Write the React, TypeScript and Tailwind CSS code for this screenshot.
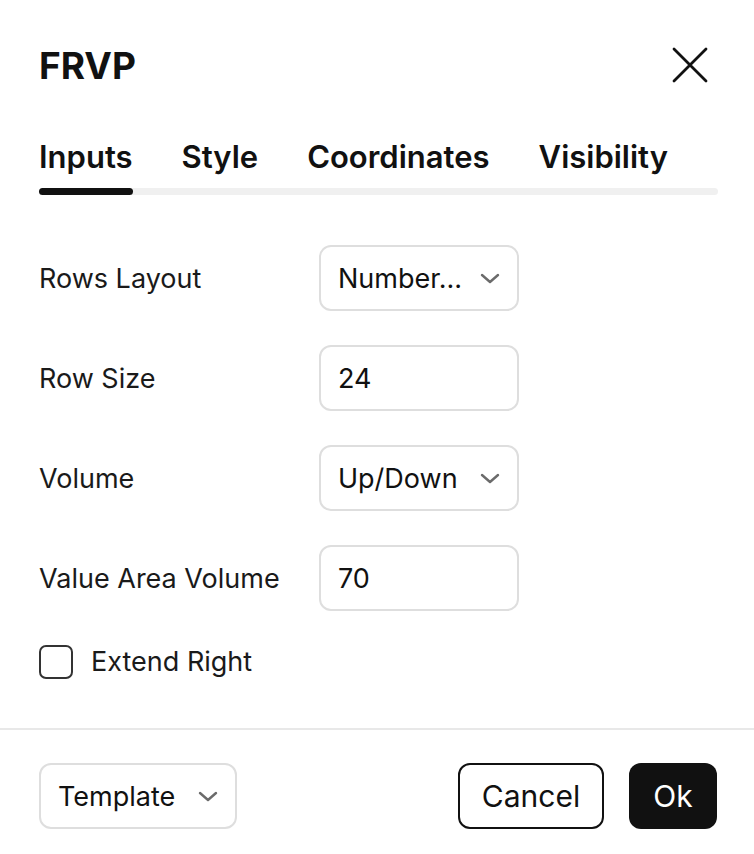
import React, { useState } from 'react';

const tabs = ['Inputs', 'Style', 'Coordinates', 'Visibility'];

const Chevron = () => (
  <svg width="22" height="22" viewBox="0 0 22 22" fill="none" className="shrink-0">
    <path d="M3 8l8 7 8-7" stroke="#6b6b6b" strokeWidth="2.4" strokeLinecap="round" strokeLinejoin="round" />
  </svg>
);

const SelectBox = ({ value, width = 'w-[200px]' }: { value: string; width?: string }) => (
  <div
    className={`${width} h-[66px] flex items-center justify-between border-2 border-[#dedede] rounded-[12px] pl-[17px] pr-[16px] text-[27px] text-[#111]`}
  >
    <span className="truncate pt-[3px]">{value}</span>
    <Chevron />
  </div>
);

const InputBox = ({ value }: { value: string }) => (
  <div className="w-[200px] h-[66px] flex items-center border-2 border-[#dedede] rounded-[12px] px-[17px] pt-[3px] text-[27px] text-[#111]">
    {value}
  </div>
);

export default function App() {
  const [active, setActive] = useState(0);
  const [extend, setExtend] = useState(false);

  const rows: Array<{ label: string; kind: 'select' | 'input'; value: string }> = [
    { label: 'Rows Layout', kind: 'select', value: 'Number...' },
    { label: 'Row Size', kind: 'input', value: '24' },
    { label: 'Volume', kind: 'select', value: 'Up/Down' },
    { label: 'Value Area Volume', kind: 'input', value: '70' },
  ];

  return (
    <div className="w-[754px] h-[854px] bg-white flex flex-col font-['Inter','Liberation_Sans',sans-serif] text-[#111]">
      {/* Header */}
      <div className="pt-[30px] pl-[39px] pr-[36px] h-[100px] flex items-center justify-between">
        <h1 className="text-[37px] font-bold leading-none">FRVP</h1>
        <button className="mr-[8px] w-[40px] h-[40px] flex items-center justify-center">
          <svg width="40" height="40" viewBox="0 0 40 40" fill="none">
            <path d="M4 4l32 32M36 4L4 36" stroke="#111" strokeWidth="2.8" strokeLinecap="round" />
          </svg>
        </button>
      </div>

      {/* Tabs */}
      <div className="pl-[39px] pr-[36px] pt-[39px]">
        <div className="flex gap-[49px]">
          {tabs.map((t, i) => (
            <button
              key={t}
              onClick={() => setActive(i)}
              className="text-[31px] font-semibold leading-[36px] text-[#111]"
            >
              {t}
            </button>
          ))}
        </div>
        <div className="mt-[13px] h-[7px] rounded-full bg-[#f0f0f0] flex">
          <div className="w-[94px] h-[7px] rounded-full bg-[#111]" />
        </div>
      </div>

      {/* Rows */}
      <div className="pl-[39px] pr-[36px] pt-[50px] flex flex-col gap-[34px]">
        {rows.map((r) => (
          <div key={r.label} className="flex items-center">
            <div className="w-[280px] pt-[3px] text-[27px] text-[#1a1a1a]">{r.label}</div>
            {r.kind === 'select' ? <SelectBox value={r.value} /> : <InputBox value={r.value} />}
          </div>
        ))}
        <label className="h-[34px] flex items-center gap-[18px] cursor-pointer">
          <span
            onClick={() => setExtend(!extend)}
            className={`w-[34px] h-[34px] border-2 border-[#333] rounded-[7px] ${extend ? 'bg-[#111]' : 'bg-white'}`}
          />
          <span className="text-[27px] leading-[34px] text-[#1a1a1a]">Extend Right</span>
        </label>
      </div>

      {/* Divider */}
      <div className="mt-[49px] h-[2px] bg-[#e8e8e8]" />

      {/* Footer */}
      <div className="pl-[39px] pr-[37px] pt-[33px] flex items-center justify-between">
        <SelectBox value="Template" width="w-[198px]" />
        <div className="flex gap-[25px]">
          <button className="w-[146px] h-[66px] border-2 border-[#111] rounded-[12px] text-[30px] text-[#111]">
            Cancel
          </button>
          <button className="w-[88px] h-[66px] bg-[#111] rounded-[12px] text-[30px] text-white">Ok</button>
        </div>
      </div>
    </div>
  );
}
